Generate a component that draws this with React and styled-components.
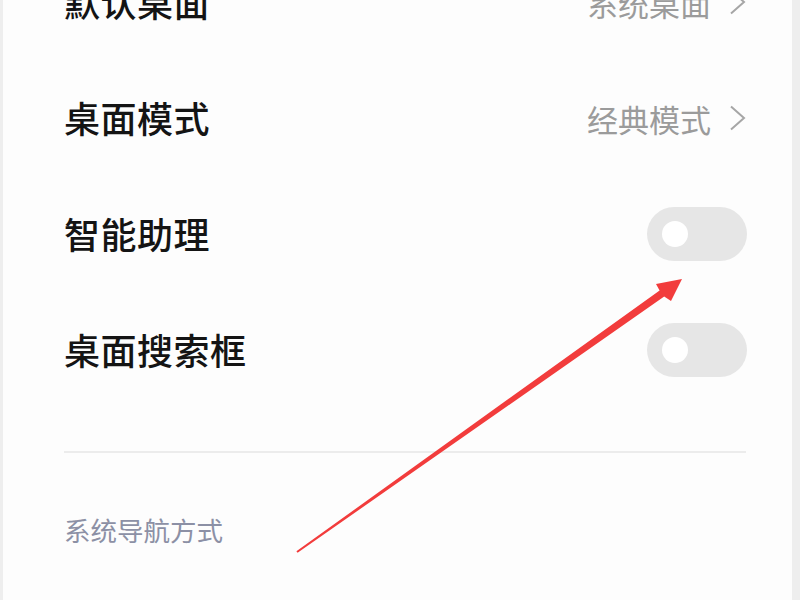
import styled, { createGlobalStyle } from 'styled-components';

const GlobalStyle = createGlobalStyle`
    html, body {
        margin: 0;
        padding: 0;
        background: #eeeeee;
        overflow: hidden;
    }
    body {
        font-family: "Noto Sans CJK SC", "Noto Sans", sans-serif;
    }
`;

const Screen = styled.div`
    position: relative;
    width: 789px;
    height: 600px;
    margin-left: 3px;
    background: #fdfdfd;
    box-sizing: border-box;
    padding: 0 46px 0 61px;
    overflow: hidden;
`;

const List = styled.div`
    display: flex;
    flex-direction: column;
    margin-top: -56px;
`;

const Row = styled.div`
    height: 116px;
    display: flex;
    align-items: center;
    justify-content: space-between;
`;

const Label = styled.span`
    font-size: 36px;
    line-height: 1;
    font-weight: 500;
    color: #141414;
    letter-spacing: 0.5px;
    margin-top: -2px;
`;

const Value = styled.span`
    display: flex;
    align-items: center;
    gap: 18px;
    font-size: 31px;
    line-height: 1;
    color: #9b9b9b;
`;

const Toggle = styled.div`
    width: 100px;
    height: 54px;
    border-radius: 27px;
    background: #e6e6e6;
    display: flex;
    align-items: center;
    padding-left: 15px;
    box-sizing: border-box;
    margin-right: -1px;

    &::before {
        content: '';
        width: 26px;
        height: 26px;
        border-radius: 50%;
        background: #ffffff;
    }
`;

const Divider = styled.div`
    height: 2px;
    background: #ececec;
    margin-top: 43px;
`;

const SectionTitle = styled.div`
    margin-top: 64px;
    font-size: 26.5px;
    line-height: 1;
    color: #8c90a5;
`;

const Annotation = styled.svg`
    position: absolute;
    left: -3px;
    top: 0;
    pointer-events: none;
`;

const Chevron = () => (
    <svg width="17" height="26" viewBox="0 0 17 26">
        <path d="M2 1.5 L15 13 L2 24.5" fill="none" stroke="#a6a6a6" strokeWidth="2" />
    </svg>
);

const rows = [
    { label: '默认桌面', value: '系统桌面' },
    { label: '桌面模式', value: '经典模式' },
    { label: '智能助理', toggle: true },
    { label: '桌面搜索框', toggle: true },
];

export default function App() {
    return (
        <>
            <GlobalStyle />
            <Screen>
                <List>
                    {rows.map(r => (
                        <Row key={r.label}>
                            <Label>{r.label}</Label>
                            {r.toggle ? (
                                <Toggle />
                            ) : (
                                <Value>
                                    {r.value}
                                    <Chevron />
                                </Value>
                            )}
                        </Row>
                    ))}
                </List>
                <Divider />
                <SectionTitle>系统导航方式</SectionTitle>
                <Annotation width="800" height="600" viewBox="0 0 800 600">
                    <polygon
                        points="296.4,551.3 659.6,290.4 656,284 682,279 671,301 664.2,296.6 297.6,552.7"
                        fill="#f23c3c"
                    />
                </Annotation>
            </Screen>
        </>
    );
}
